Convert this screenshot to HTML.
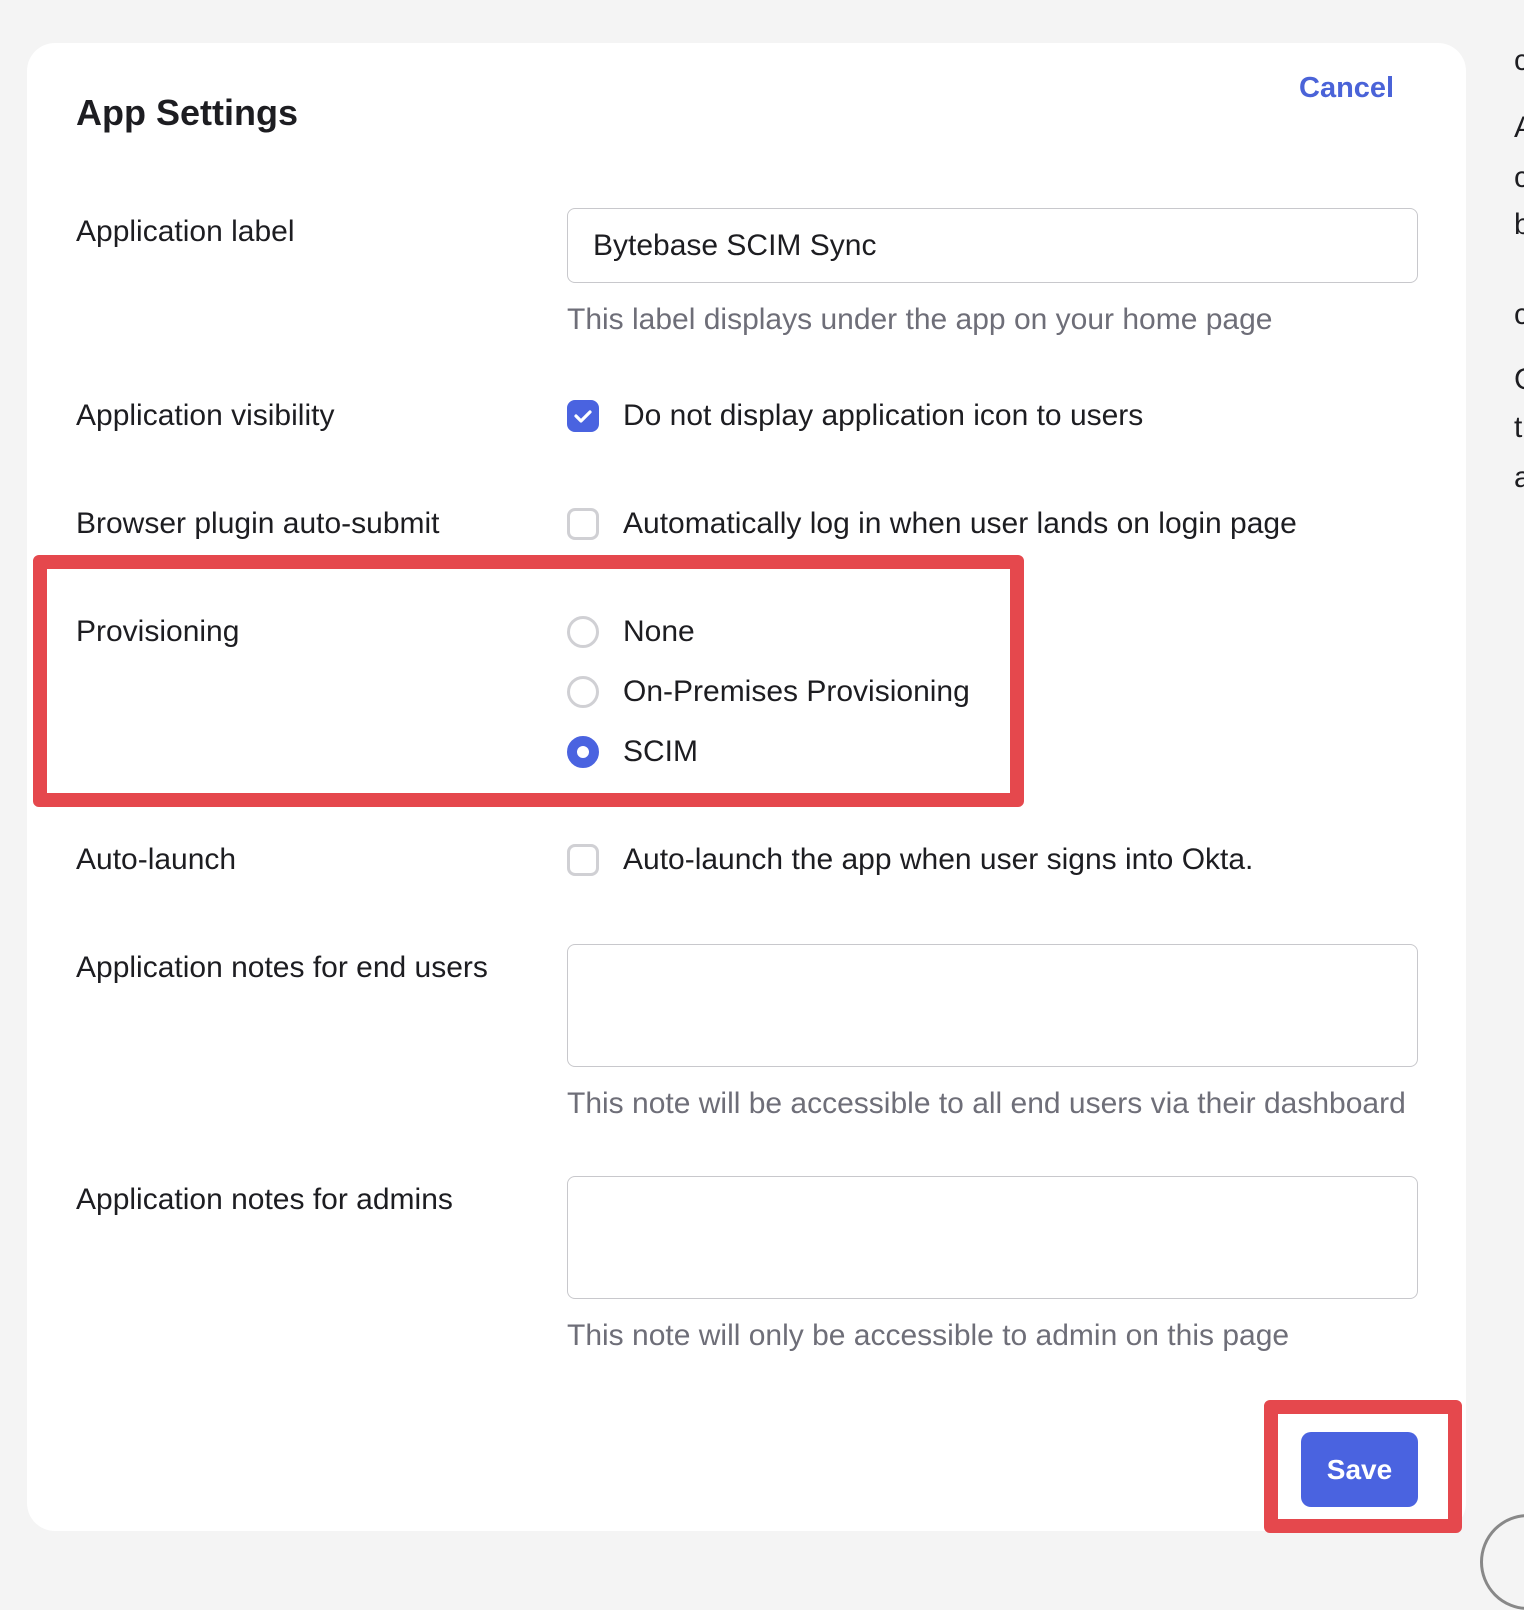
<!DOCTYPE html>
<html><head><style>
body{margin:0;width:1524px;height:1556px;background:#f4f4f4;font-family:"Liberation Sans",sans-serif;color:#1d1d21;position:relative;overflow:hidden}
.a{position:absolute;white-space:nowrap;line-height:34px}
.card{position:absolute;left:27px;top:43px;width:1439px;height:1488px;background:#fff;border-radius:28px}
.l{font-size:30px;}
.h{font-size:30px;color:#6e6e78}
.inp{position:absolute;left:567px;width:849px;border:1.5px solid #c8c8cc;border-radius:8px;background:#fff}
.cb{position:absolute;left:567px;width:32px;height:32px;border:3px solid #d0d0d4;border-radius:8px;box-sizing:border-box}
.rd{position:absolute;left:567px;width:32px;height:32px;border:3px solid #d0d0d4;border-radius:50%;box-sizing:border-box}
.red{position:absolute;border:14px solid #e5484d;border-radius:6px;box-sizing:border-box}
</style></head><body>
<div class="card"></div>
<div class="a" style="left:76px;top:96px;font-size:36px;font-weight:600">App Settings</div>
<div class="a" style="left:1299px;top:71px;font-size:29px;color:#4a63d8;font-weight:600">Cancel</div>

<div class="a l" style="left:76px;top:215px">Application label</div>
<div class="inp" style="top:208px;height:73px"></div>
<div class="a l" style="left:593px;top:229px">Bytebase SCIM Sync</div>
<div class="a h" style="left:567px;top:303px">This label displays under the app on your home page</div>

<div class="a l" style="left:76px;top:399px">Application visibility</div>
<div class="cb" style="top:400px;background:#4a63e0;border-color:#4a63e0"><svg width="26" height="26" viewBox="0 0 26 26" style="position:absolute;left:0;top:0"><path d="M6 13l5 5 9-9" stroke="#fff" stroke-width="3.2" fill="none" stroke-linecap="round" stroke-linejoin="round"/></svg></div>
<div class="a l" style="left:623px;top:399px">Do not display application icon to users</div>

<div class="a l" style="left:76px;top:507px">Browser plugin auto-submit</div>
<div class="cb" style="top:508px"></div>
<div class="a l" style="left:623px;top:507px">Automatically log in when user lands on login page</div>

<div class="a l" style="left:76px;top:615px">Provisioning</div>
<div class="rd" style="top:616px"></div>
<div class="a l" style="left:623px;top:615px">None</div>
<div class="rd" style="top:676px"></div>
<div class="a l" style="left:623px;top:675px">On-Premises Provisioning</div>
<div class="rd" style="top:736px;border:10px solid #4a63e0;background:#fff"></div>
<div class="a l" style="left:623px;top:735px">SCIM</div>
<div class="red" style="left:33px;top:555px;width:991px;height:252px"></div>

<div class="a l" style="left:76px;top:843px">Auto-launch</div>
<div class="cb" style="top:844px"></div>
<div class="a l" style="left:623px;top:843px">Auto-launch the app when user signs into Okta.</div>

<div class="a l" style="left:76px;top:951px">Application notes for end users</div>
<div class="inp" style="top:944px;height:121px"></div>
<div class="a h" style="left:567px;top:1087px">This note will be accessible to all end users via their dashboard</div>

<div class="a l" style="left:76px;top:1183px">Application notes for admins</div>
<div class="inp" style="top:1176px;height:121px"></div>
<div class="a h" style="left:567px;top:1319px">This note will only be accessible to admin on this page</div>

<div class="a" style="left:1301px;top:1432px;width:117px;height:75px;background:#4a63e0;border-radius:10px;color:#fff;font-size:28px;font-weight:600;text-align:center;line-height:75px">Save</div>
<div class="red" style="left:1264px;top:1400px;width:198px;height:133px"></div>

<div class="a l" style="left:1514px;top:44px">c</div>
<div class="a l" style="left:1514px;top:111px">A</div>
<div class="a l" style="left:1514px;top:161px">c</div>
<div class="a l" style="left:1514px;top:208px">b</div>
<div class="a l" style="left:1514px;top:298px">c</div>
<div class="a l" style="left:1514px;top:363px">C</div>
<div class="a l" style="left:1514px;top:411px">t</div>
<div class="a l" style="left:1514px;top:461px">a</div>
<div class="a" style="left:1480px;top:1514px;width:90px;height:90px;border:3px solid #888;border-radius:50%"></div>
</body></html>
